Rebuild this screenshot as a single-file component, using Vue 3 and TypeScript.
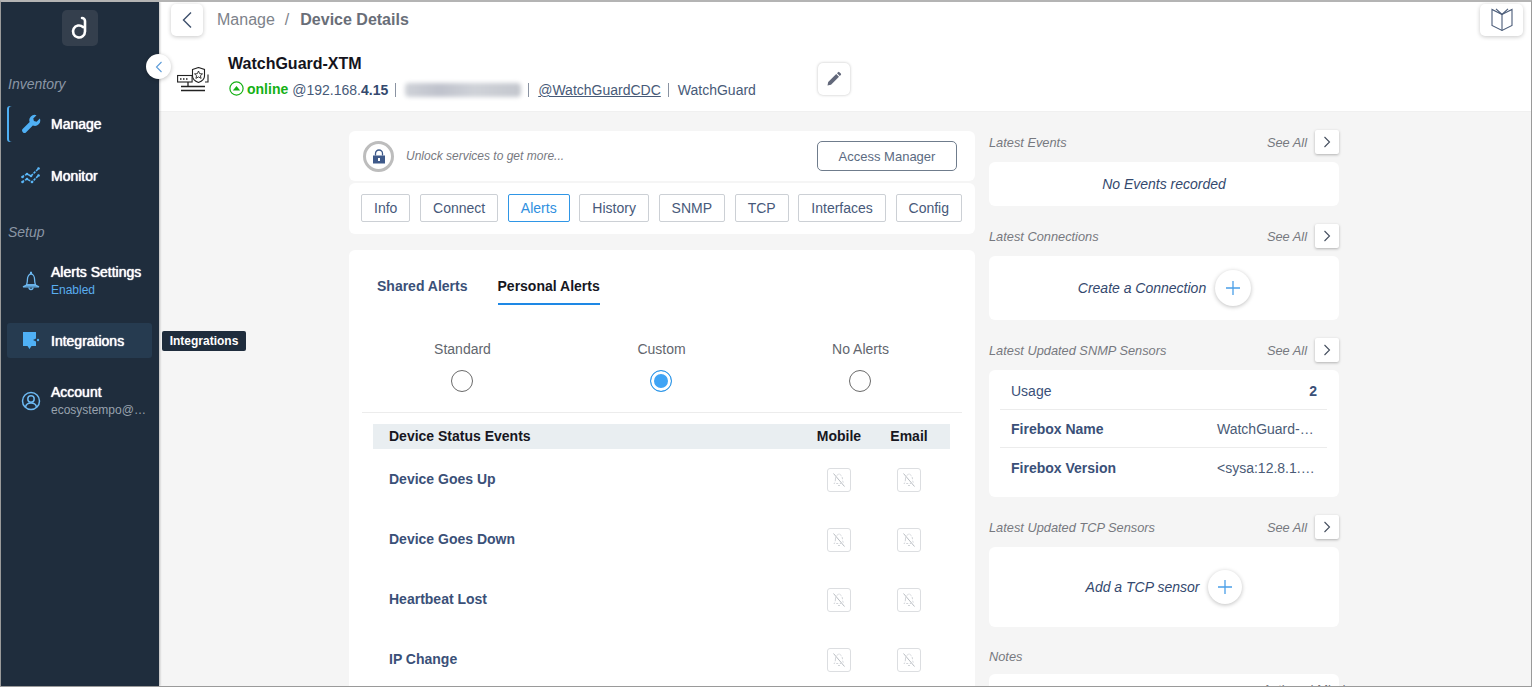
<script setup lang="ts">
import { ref } from 'vue';

const tabs = ['Info', 'Connect', 'Alerts', 'History', 'SNMP', 'TCP', 'Interfaces', 'Config'];
const activeTab = ref('Alerts');
const alertTypes = ['Standard', 'Custom', 'No Alerts'];
const alertType = ref('Custom');
const events = ['Device Goes Up', 'Device Goes Down', 'Heartbeat Lost', 'IP Change'];
</script>

<template>
  <div class="app">
    <aside class="sidebar">
      <div class="logo">
        <svg width="24" height="26" viewBox="0 0 24 26" fill="none" stroke="#fff" stroke-width="2.6" stroke-linecap="round">
          <path d="M15 12a6 6 0 1 0 2 4.500V6a3 3 0 0 0-3-3" />
        </svg>
      </div>

      <div class="section-label first">Inventory</div>
      <div class="nav-item marked">
        <svg class="nav-icon" width="20" height="20" viewBox="0 0 24 24" fill="#4fb0f5">
          <path d="M22.600 5.400l-3.900 3.800-3.200-.8-.8-3.100 3.900-3.900a6.400 6.400 0 0 0-8.200 8.300L2.200 17.800a2.800 2.800 0 0 0 4 4l8-8.100a6.400 6.400 0 0 0 8.400-8.300z" />
        </svg>
        <span class="nav-title">Manage</span>
      </div>
      <div class="nav-item gap-small">
        <svg class="nav-icon" width="20" height="20" viewBox="0 0 20 20" fill="#5ab6f7" stroke="#5ab6f7" stroke-width="1.500">
          <path fill="none" stroke-dasharray="2.500 1" d="M1 11l5-3 4 2 8-8" />
          <path fill="none" stroke-dasharray="2.500 1" d="M1 16l5-3 5 3 7-7" />
          <circle cx="1.500" cy="11" r="1.300" stroke="none" />
          <circle cx="6" cy="8" r="1.300" stroke="none" />
          <circle cx="10" cy="10" r="1.300" stroke="none" />
          <circle cx="17.500" cy="2.500" r="1.300" stroke="none" />
          <circle cx="1.500" cy="16" r="1.300" stroke="none" />
          <circle cx="6" cy="13" r="1.300" stroke="none" />
          <circle cx="11" cy="16" r="1.300" stroke="none" />
          <circle cx="17.500" cy="9.500" r="1.300" stroke="none" />
        </svg>
        <span class="nav-title">Monitor</span>
      </div>

      <div class="section-label">Setup</div>
      <div class="nav-item setup-first">
        <svg class="nav-icon" width="20" height="20" viewBox="0 0 20 20" fill="none" stroke="#6db9f2" stroke-width="1.300">
          <path d="M10 .8v2.200" stroke-width="2" />
          <path d="M5.500 14c.4-1.200.9-2.500.9-5.300 0-3 1.500-5.700 3.600-5.700s3.600 2.700 3.600 5.700c0 2.800.5 4.100.9 5.300z" />
          <path d="M2 15.800c1-.4 2.300-1.100 3.500-1.800h9c1.200.7 2.500 1.400 3.500 1.800z" />
          <path d="M8 16.500a2 2 0 0 0 4 0" />
        </svg>
        <div>
          <div class="nav-title">Alerts Settings</div>
          <div class="nav-sub blue">Enabled</div>
        </div>
      </div>
      <div class="nav-item active">
        <svg class="nav-icon" width="20" height="20" viewBox="0 0 20 20" fill="#4fb0f5">
          <path d="M2 1h13v6.500l-3 1.500 3 1.500V15h-4.500l-2 3-2-3H2z" />
          <circle cx="17" cy="9" r="1.200" />
        </svg>
        <span class="nav-title">Integrations</span>
        <div class="tooltip">Integrations</div>
      </div>
      <div class="nav-item">
        <svg class="nav-icon" width="20" height="20" viewBox="0 0 20 20" fill="none" stroke="#6db9f2" stroke-width="1.500">
          <circle cx="10" cy="10" r="8.500" />
          <circle cx="10" cy="8" r="3.200" />
          <path d="M4.500 16c.6-2.800 2.700-4 5.500-4s4.900 1.200 5.500 4" />
        </svg>
        <div class="nav-text">
          <div class="nav-title">Account</div>
          <div class="nav-sub">ecosystempo@…</div>
        </div>
      </div>
    </aside>

    <main class="main">
      <button class="collapse">
        <svg width="8" height="12" viewBox="0 0 8 12" fill="none" stroke="#5b9bd8" stroke-width="1.100"><path d="M6.500 1L1.500 6l5 5" /></svg>
      </button>

      <header class="header">
        <div class="crumbs">
          <div class="square-btn back">
            <svg width="12" height="18" viewBox="0 0 12 18" fill="none" stroke="#3d4f6b" stroke-width="1.400"><path d="M10 1.500L2.500 9l7.500 7.500" /></svg>
          </div>
          <span class="crumb">Manage</span>
          <span class="crumb slash">/</span>
          <span class="crumb current">Device Details</span>
          <div class="square-btn book">
            <svg width="24" height="24" viewBox="0 0 24 24" fill="none" stroke="#4a5b78" stroke-width="1.100">
              <path d="M12 6.500L2 1.500v16l10 5 10-5v-16z" />
              <path d="M12 6.500v16" />
              <path d="M12 6.500L6 .8M12 6.500L18 .8" />
            </svg>
          </div>
        </div>

        <div class="device">
          <svg class="device-icon" width="33" height="25" viewBox="0 0 33 25" fill="none" stroke="#222" stroke-width="1.100">
            <rect x=".6" y="8.500" width="14.500" height="6.500" />
            <path d="M3 12h1.500M6 12h1.500M9 12h1.500" stroke-width="1.500" />
            <path d="M11 15v4M4 19.500h24M4 23.500h24" stroke-width="1.300" />
            <path d="M15.500 2.500l6-2 6 2v6.500c0 3-2.500 5.200-6 6.500-3.500-1.300-6-3.500-6-6.500z" fill="#fff" />
            <path d="M21.500 4l1.200 2.700 2.800.2-2.100 1.800.7 2.700-2.600-1.500-2.600 1.500.7-2.700-2.100-1.800 2.800-.2z" stroke-width=".9" />
            <path d="M31 7.500v7.500h-3" />
          </svg>
          <div class="device-text">
            <div class="device-name">WatchGuard-XTM</div>
            <div class="device-meta">
              <svg class="status-icon" width="15" height="15" viewBox="0 0 15 15">
                <circle cx="7.500" cy="7.500" r="6.600" fill="none" stroke="#15b015" stroke-width="1.200" />
                <path d="M3.800 9.500l3.700-4.500 3.700 4.500z" fill="#15b015" />
              </svg>
              <span class="online">online</span>
              <span class="ip">@192.168.<b>4.15</b></span>
              <i class="sep"></i>
              <span class="blurred"></span>
              <i class="sep"></i>
              <span class="link">@WatchGuardCDC</span>
              <i class="sep"></i>
              <span>WatchGuard</span>
            </div>
          </div>
          <div class="square-btn edit">
            <svg width="16" height="16" viewBox="0 0 16 16" fill="#62687a"><path d="M1.500 14.500l.7-3.500 8-8 2.800 2.800-8 8zM11 2.200l1-1a1 1 0 0 1 1.400 0l1.400 1.400a1 1 0 0 1 0 1.400l-1 1z" /></svg>
          </div>
        </div>
      </header>

      <div class="content">
        <section class="left-col">
          <div class="card unlock">
            <div class="lock-ring">
              <svg width="14" height="15" viewBox="0 0 14 15">
                <path d="M3.500 6.500V4.500a3.500 3.500 0 0 1 7 0v2" fill="none" stroke="#3f5a8a" stroke-width="1.300" />
                <rect x="1" y="6.500" width="12" height="8" fill="#3f5a8a" />
                <rect x="6" y="9" width="2" height="3" fill="#fff" />
              </svg>
            </div>
            <span class="unlock-text">Unlock services to get more...</span>
            <button class="access">Access Manager</button>
          </div>

          <div class="card tab-card">
            <button v-for="tab in tabs" :key="tab" class="tab" :class="{ selected: tab === activeTab }" @click="activeTab = tab">{{ tab }}</button>
          </div>

          <div class="card alerts">
            <div class="sub-tabs">
              <span class="sub-tab">Shared Alerts</span>
              <span class="sub-tab on">Personal Alerts</span>
            </div>

            <div class="alert-types">
              <div v-for="t in alertTypes" :key="t" class="alert-type" @click="alertType = t">
                <span class="type-label">{{ t }}</span>
                <span class="radio" :class="{ checked: t === alertType }"></span>
              </div>
            </div>

            <div class="event-head">
              <span class="head-title">Device Status Events</span>
              <span class="head-col">Mobile</span>
              <span class="head-col">Email</span>
            </div>
            <div v-for="ev in events" :key="ev" class="event-row">
              <span class="event-name">{{ ev }}</span>
              <span v-for="col in 2" :key="col" class="mute-cell">
                <span class="mute-box">
                  <svg width="16" height="16" viewBox="0 0 16 16" fill="none" stroke="#d2d5d9" stroke-width="1">
                    <path d="M2.500 1.500l11 13" stroke="#b9bdc2" />
                    <path d="M8 1.500v1M4.500 7c0-2.500 1.500-4.500 3.500-4.500S11.500 4.500 11.500 7c0 2 .5 3 1 4M4.500 7c0 2-.5 3.500-1.500 4.500h7" stroke-dasharray="2 1.500" />
                    <path d="M7 13.500h2" />
                  </svg>
                </span>
              </span>
            </div>
          </div>
        </section>

        <section class="right-col">
          <div class="side-head">
            <span class="side-title">Latest Events</span>
            <span class="see-all">See All</span>
            <span class="next"><svg width="8" height="12" viewBox="0 0 8 12" fill="none" stroke="#444e5e" stroke-width="1.100"><path d="M1.500 1l5 5-5 5" /></svg></span>
          </div>
          <div class="card side-card events-card"><em>No Events recorded</em></div>

          <div class="side-head">
            <span class="side-title">Latest Connections</span>
            <span class="see-all">See All</span>
            <span class="next"><svg width="8" height="12" viewBox="0 0 8 12" fill="none" stroke="#444e5e" stroke-width="1.100"><path d="M1.500 1l5 5-5 5" /></svg></span>
          </div>
          <div class="card side-card connections-card">
            <em>Create a Connection</em>
            <span class="plus"><svg width="14" height="14" viewBox="0 0 14 14" stroke="#4a9fe8" stroke-width="1.300"><path d="M7 0v14M0 7h14" /></svg></span>
          </div>

          <div class="side-head">
            <span class="side-title">Latest Updated SNMP Sensors</span>
            <span class="see-all">See All</span>
            <span class="next"><svg width="8" height="12" viewBox="0 0 8 12" fill="none" stroke="#444e5e" stroke-width="1.100"><path d="M1.500 1l5 5-5 5" /></svg></span>
          </div>
          <div class="card snmp-card">
            <div class="snmp-row">
              <span>Usage</span>
              <b class="usage">2</b>
            </div>
            <div class="snmp-row">
              <b class="snmp-key">Firebox Name</b>
              <span class="snmp-val">WatchGuard-…</span>
            </div>
            <div class="snmp-row last">
              <b class="snmp-key">Firebox Version</b>
              <span class="snmp-val">&lt;sysa:12.8.1.…</span>
            </div>
          </div>

          <div class="side-head">
            <span class="side-title">Latest Updated TCP Sensors</span>
            <span class="see-all">See All</span>
            <span class="next"><svg width="8" height="12" viewBox="0 0 8 12" fill="none" stroke="#444e5e" stroke-width="1.100"><path d="M1.500 1l5 5-5 5" /></svg></span>
          </div>
          <div class="card side-card tcp-card">
            <em>Add a TCP sensor</em>
            <span class="plus small"><svg width="14" height="14" viewBox="0 0 14 14" stroke="#4a9fe8" stroke-width="1.300"><path d="M7 0v14M0 7h14" /></svg></span>
          </div>

          <div class="side-head notes-head">
            <span class="side-title">Notes</span>
          </div>
          <div class="card notes-card"><span class="notes-text">Actioned Mind</span></div>
        </section>
      </div>
    </main>
  </div>
</template>

<style>
html, body {
  margin: 0;
  overflow: hidden;
}
</style>

<style scoped>
* {
  box-sizing: border-box;
}

.app {
  display: flex;
  width: 1532px;
  height: 687px;
  overflow: hidden;
  border: 1px solid #9a9a9a;
  border-top: 2px solid #b4b4b4;
  font-family: 'Liberation Sans', Arial, sans-serif;
  font-size: 14px;
  color: #3a5078;
  background: #f5f5f5;
}

/* sidebar */
.sidebar {
  position: relative;
  z-index: 1;
  width: 158px;
  flex-shrink: 0;
  background: #1f2d3d;
  color: #fff;
  box-shadow: 1px 0 2px rgba(0, 0, 0, 0.25);
}

.logo {
  display: flex;
  align-items: center;
  justify-content: center;
  width: 36px;
  height: 36px;
  margin: 8px 0 0 61px;
  background: #343f4d;
  border-radius: 5px;
}

.section-label {
  margin: 29px 0 0 7px;
  font-size: 14px;
  line-height: 18px;
  font-style: italic;
  color: #8b96a5;
}

.section-label.first {
  margin-bottom: 13px;
}

.nav-item {
  position: relative;
  display: flex;
  align-items: center;
  gap: 10px;
  width: 145px;
  height: 36px;
  margin: 0 0 24px 6px;
  padding-left: 14px;
  border-radius: 3px;
}

.nav-item.marked {
  margin-bottom: 16px;
  box-shadow: inset 2px 0 0 #4fb0f5;
}

.nav-item.gap-small {
  margin-bottom: 0;
}

.nav-item.setup-first {
  margin-top: 22px;
}

.nav-item.active {
  height: 35px;
  margin-bottom: 25px;
  background: #263b50;
}

.nav-icon {
  flex-shrink: 0;
}

.nav-title {
  font-size: 14px;
  line-height: 18px;
  color: #fff;
  text-shadow: 0 0 1px #fff, 0 0 1px rgba(255, 255, 255, 0.6);
  white-space: nowrap;
}

.nav-sub {
  font-size: 12px;
  line-height: 18px;
  color: #98a2ae;
  white-space: nowrap;
}

.nav-sub.blue {
  color: #5aaef0;
}

.nav-text {
  min-width: 0;
  width: 96px;
}

.tooltip {
  position: absolute;
  left: 155px;
  top: 8px;
  z-index: 5;
  width: 84px;
  height: 20px;
  background: #1f2d3d;
  border-radius: 2px;
  color: #fff;
  font-size: 12px;
  font-weight: 700;
  line-height: 20px;
  text-align: center;
}

/* header */
.main {
  position: relative;
  flex: 1;
  min-width: 0;
  display: flex;
  flex-direction: column;
}

.collapse {
  position: absolute;
  left: -13px;
  top: 52px;
  z-index: 4;
  display: flex;
  align-items: center;
  justify-content: center;
  width: 25px;
  height: 25px;
  padding: 0;
  border: 0;
  border-radius: 50%;
  background: #fff;
  box-shadow: 0 1px 4px rgba(0, 0, 0, 0.25);
}

.header {
  height: 110px;
  flex-shrink: 0;
  background: #fff;
  border-bottom: 1px solid #f0f0f0;
}

.crumbs {
  display: flex;
  align-items: center;
  height: 34px;
  padding: 1px 8px 0 12px;
  font-size: 16px;
}

.square-btn {
  display: flex;
  align-items: center;
  justify-content: center;
  background: #fff;
  border-radius: 5px;
  box-shadow: 0 1px 4px rgba(0, 0, 0, 0.22);
}

.back {
  width: 32px;
  height: 32px;
  margin-right: 14px;
}

.book {
  width: 43px;
  height: 32px;
  margin-left: auto;
}

.crumb {
  color: #7d828a;
}

.crumb.slash {
  margin: 0 11px 0 10px;
}

.crumb.current {
  color: #696e78;
  font-weight: 700;
}

.device {
  display: flex;
  align-items: center;
  padding: 18px 0 0 18px;
}

.device-icon {
  margin: 5px 18px 0 0;
}

.device-name {
  font-size: 16px;
  font-weight: 700;
  line-height: 20px;
  color: #14141c;
}

.device-meta {
  display: flex;
  align-items: center;
  margin-top: 6px;
  height: 20px;
  color: #475a78;
}

.status-icon {
  margin: -3px 3px 0 1px;
}

.online {
  color: #15b015;
  font-weight: 700;
  margin-right: 4px;
  margin-top: -2px;
}

.ip b {
  color: #34496e;
}

.sep {
  width: 1px;
  height: 14px;
  margin: 0 9px 0 7px;
  background: #8a93a2;
}

.blurred {
  width: 116px;
  height: 14px;
  border-radius: 4px;
  background: linear-gradient(90deg, #cfd2d8, #bfc2cc 30%, #cfd2d8 60%, #c4c7ce);
  filter: blur(2px);
}

.link {
  text-decoration: underline;
}

.edit {
  width: 32px;
  height: 32px;
  margin: 4px 0 0 62px;
  box-shadow: 0 0 3px rgba(0, 0, 0, 0.25);
}

/* content */
.content {
  flex: 1;
  min-height: 0;
  display: flex;
  gap: 14px;
  padding: 18px 0 0 190px;
  overflow: hidden;
}

.card {
  background: #fff;
  border-radius: 6px;
}

.left-col {
  width: 626px;
  flex-shrink: 0;
  padding-top: 1px;
}

.unlock {
  display: flex;
  align-items: center;
  height: 50px;
  padding: 0 18px 0 14px;
}

.lock-ring {
  display: flex;
  align-items: center;
  justify-content: center;
  width: 31px;
  height: 31px;
  border: 3px solid #bdbdbd;
  border-radius: 50%;
}

.unlock-text {
  margin-left: 12px;
  font-size: 12px;
  font-style: italic;
  color: #77797f;
}

.access {
  width: 140px;
  height: 30px;
  margin-left: auto;
  padding: 0;
  background: #fff;
  border: 1px solid #6f7c8c;
  border-radius: 5px;
  font: 13px 'Liberation Sans', Arial, sans-serif;
  color: #5b6b82;
}

.tab-card {
  display: flex;
  justify-content: space-between;
  align-items: center;
  height: 51px;
  margin-top: 2px;
  padding: 0 13px 2px 12px;
}

.tab {
  height: 28px;
  padding: 0 12px;
  background: #fff;
  border: 1px solid #ccd0d5;
  border-radius: 2px;
  font: 14px 'Liberation Sans', Arial, sans-serif;
  color: #47597a;
}

.tab.selected {
  border-color: #2f96e6;
  color: #2f8fe0;
}

.alerts {
  margin-top: 16px;
  padding-top: 27px;
  height: 500px;
}

.sub-tabs {
  display: flex;
  gap: 30px;
  padding-left: 28px;
}

.sub-tab {
  padding-bottom: 8px;
  border-bottom: 2px solid transparent;
  font-weight: 700;
  line-height: 18px;
  color: #3a5078;
}

.sub-tab.on {
  color: #17171f;
  border-bottom-color: #1e88e5;
}

.alert-types {
  display: grid;
  grid-template-columns: repeat(3, 199px);
  margin: 35px 13px 0;
  padding-bottom: 20px;
  border-bottom: 1px solid #ececec;
}

.alert-type {
  display: flex;
  flex-direction: column;
  align-items: center;
  gap: 12px;
}

.type-label {
  padding-left: 2px;
  line-height: 18px;
  color: #62666e;
}

.radio {
  width: 22px;
  height: 22px;
  border: 1px solid #6a6a6a;
  border-radius: 50%;
  background: #fff;
}

.radio.checked {
  border-color: #2f96e6;
  background: #3fa4f5;
  box-shadow: inset 0 0 0 3px #fff;
}

.event-head {
  display: grid;
  grid-template-columns: 1fr 70px 70px;
  align-items: center;
  height: 25px;
  margin: 11px 25px 0 24px;
  padding: 0 6px 2px 16px;
  background: #e9eef1;
  font-weight: 700;
  color: #17171f;
}

.head-col {
  text-align: center;
}

.event-row {
  display: grid;
  grid-template-columns: 1fr 70px 70px;
  align-items: center;
  height: 60px;
  margin: 0 25px 0 24px;
  padding: 0 6px 0 16px;
}

.event-name {
  font-weight: 700;
  color: #3a5078;
}

.mute-cell {
  display: flex;
  justify-content: center;
  padding-top: 2px;
}

.mute-box {
  display: flex;
  align-items: center;
  justify-content: center;
  width: 24px;
  height: 24px;
  border: 1px solid #dcdee1;
  border-radius: 3px;
}

/* right column */
.right-col {
  width: 350px;
  flex-shrink: 0;
}

.side-head {
  display: flex;
  align-items: center;
  height: 24px;
  margin-bottom: 8px;
}

.side-title,
.see-all {
  font-size: 12.8px;
  font-style: italic;
  color: #77797f;
}

.see-all {
  margin-left: auto;
  margin-right: 8px;
}

.next {
  display: flex;
  align-items: center;
  justify-content: center;
  width: 24px;
  height: 24px;
  background: #fff;
  border-radius: 2px;
  box-shadow: 0 1px 3px rgba(0, 0, 0, 0.28);
}

.side-card {
  display: flex;
  align-items: center;
  justify-content: center;
  margin-bottom: 18px;
}

.side-card em {
  color: #34496e;
}

.events-card {
  height: 44px;
}

.connections-card {
  height: 64px;
  padding-left: 1px;
}

.tcp-card {
  height: 80px;
  margin-bottom: 17px;
}

.plus {
  display: flex;
  align-items: center;
  justify-content: center;
  width: 36px;
  height: 36px;
  margin-left: 9px;
  background: #fff;
  border-radius: 50%;
  box-shadow: 0 1px 4px rgba(0, 0, 0, 0.25);
}

.plus.small {
  width: 34px;
  height: 34px;
}

.snmp-card {
  height: 127px;
  margin-bottom: 18px;
  padding: 3px 12px 0 11px;
}

.snmp-row {
  display: flex;
  align-items: center;
  justify-content: space-between;
  height: 37px;
  margin-bottom: 1px;
  padding: 0 10px 0 11px;
  border-bottom: 1px solid #ececec;
}

.snmp-row.last {
  border-bottom: 0;
}

.usage,
.snmp-key {
  color: #3a5078;
}

.snmp-val {
  width: 100px;
  color: #4a5b76;
  white-space: nowrap;
}

.notes-head {
  margin-bottom: 6px;
}

.notes-card {
  height: 60px;
}

.notes-text {
  display: block;
  padding: 8px 0 0 274px;
  font-size: 13px;
  white-space: nowrap;
  color: #77797f;
}
</style>
